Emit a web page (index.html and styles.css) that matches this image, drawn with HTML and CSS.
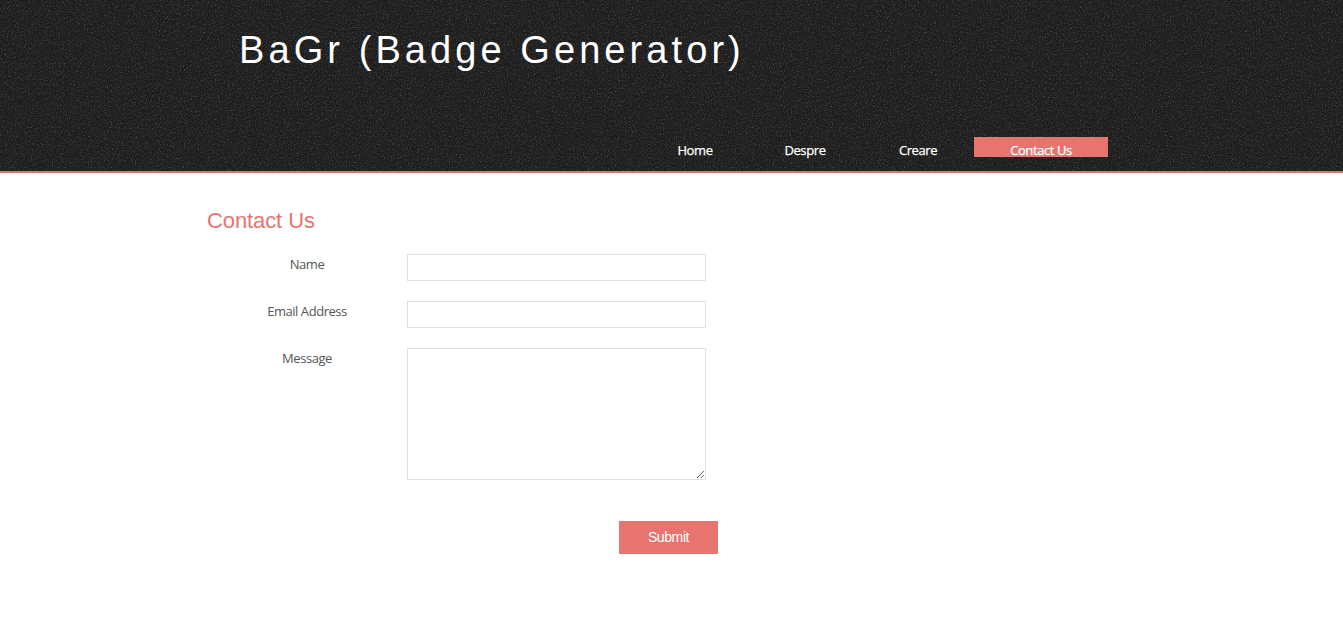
FILE: index.html
```html
<!DOCTYPE html>
<html lang="ro">
<head>
<meta charset="utf-8">
<title>BaGr (Badge Generator)</title>
<link rel="stylesheet" href="styles.css">
</head>
<body>
<header class="header">
  <svg class="texture" aria-hidden="true" width="100%" height="171">
    <filter id="grain" x="0" y="0" width="100%" height="100%" color-interpolation-filters="sRGB">
      <feTurbulence type="fractalNoise" baseFrequency="0.71 0.77" numOctaves="3" seed="9"/>
      <feColorMatrix values="1 0 0 0 0  1 0 0 0 0  1 0 0 0 0  0 0 0 0 1"/>
      <feComponentTransfer>
        <feFuncR type="table" tableValues="0.1 0.1 0.1 0.11 0.118 0.13 0.16 0.2 0.26 0.3 0.32"/>
        <feFuncG type="table" tableValues="0.1 0.1 0.1 0.11 0.118 0.13 0.16 0.2 0.26 0.3 0.32"/>
        <feFuncB type="table" tableValues="0.1 0.1 0.1 0.11 0.118 0.13 0.16 0.2 0.26 0.3 0.32"/>
      </feComponentTransfer>
    </filter>
    <rect width="100%" height="100%" filter="url(#grain)"/>
  </svg>
  <div class="header-inner">
    <h1 class="logo">BaGr (Badge Generator)</h1>
    <nav class="nav">
      <a class="nav-home">Home</a>
      <a class="nav-about">Despre</a>
      <a class="nav-create">Creare</a>
      <a class="active">Contact Us</a>
    </nav>
  </div>
</header>
<main class="content">
  <h2 class="title">Contact Us</h2>
  <form class="form">
    <label class="row"><span class="label">Name</span><input class="field" type="text"></label>
    <label class="row"><span class="label">Email Address</span><input class="field" type="text"></label>
    <label class="row"><span class="label">Message</span><textarea class="field area"></textarea></label>
    <button class="submit" type="button">Submit</button>
  </form>
</main>
</body>
</html>
```
FILE: styles.css
```css
* { box-sizing: border-box; }
body {
  margin: 0;
  background: #fff;
  color: #555;
  font: 13px/20px "Trebuchet MS", "Open Sans", sans-serif;
}
.header {
  position: relative;
  height: 173px;
  background: #222;
  border-bottom: 2px solid #d9736d;
  overflow: hidden;
}
.texture { position: absolute; inset: 0; display: block; }
.header-inner {
  position: relative;
  display: flex;
  flex-direction: column;
  justify-content: space-between;
  width: 930px;
  height: 157px;
  margin-left: 207px;
  padding: 27px 29px 0 32px;
}
.logo {
  margin: 0;
  color: #fff;
  font: 400 38px/46px "Liberation Sans", Arial, sans-serif;
  letter-spacing: 4.08px;
  white-space: nowrap;
}
.nav { display: flex; justify-content: flex-end; color: #fff; }
.nav a {
  height: 20px;
  padding-top: 3px;
  line-height: 20px;
  letter-spacing: -0.4px;
  text-align: center;
  white-space: nowrap;
  -webkit-text-stroke: 0.25px #fff;
}
.nav-home { width: 106px; }
.nav-about { width: 114px; }
.nav-create { width: 112px; }
.nav .active { width: 134px; background: #e8746f; }
.content { width: 930px; margin-left: 207px; padding-top: 33px; }
.title {
  margin: 0 0 18px;
  color: #e8746f;
  font: 400 22px/30px "Liberation Sans", Arial, sans-serif;
  letter-spacing: -0.1px;
}
.form { display: flex; flex-direction: column; width: 511px; }
.row { display: flex; align-items: flex-start; margin-bottom: 20px; }
.label { width: 200px; text-align: center; letter-spacing: -0.45px; }
.field {
  width: 299px;
  height: 27px;
  margin: 0;
  padding: 5px;
  border: 1px solid #e0e0e0;
  background: #fff;
  outline: none;
}
.area { height: 132px; resize: both; }
.submit {
  align-self: flex-end;
  width: 99px;
  height: 33px;
  margin-top: 21px;
  padding: 0 0 1px;
  border: 0;
  background: #e8746f;
  color: #fff;
  font: 14px "Liberation Sans", Arial, sans-serif;
  letter-spacing: -0.4px;
}
```
